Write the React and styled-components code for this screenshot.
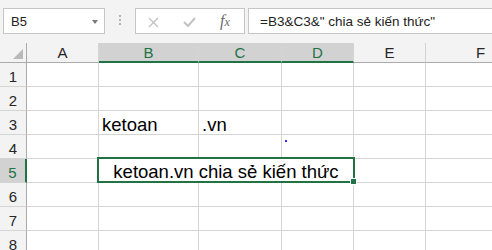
import React from "react";
import styled, { createGlobalStyle } from "styled-components";

const GREEN = "#217346";
const GRID = "#d4d4d4";
const HEAD = "#f3f3f3";
const HEAD_ON = "#d2d2d2";

const columns = [
  { name: "A", width: 72 },
  { name: "B", width: 100, selected: true },
  { name: "C", width: 83, selected: true },
  { name: "D", width: 72, selected: true },
  { name: "E", width: 72 },
  { name: "F", width: 110 },
];

const values = {
  3: { B: "ketoan", C: ".vn" },
};

export default function App() {
  return (
    <Page>
      <GlobalStyle />
      <Toolbar>
        <NameBox>
          <span>B5</span>
          <Arrow />
        </NameBox>
        <Grip>
          <Dot />
          <Dot />
          <Dot />
        </Grip>
        <FxBox>
          <svg width="11" height="11" viewBox="0 0 11 11">
            <path d="M1 1 L10 10 M10 1 L1 10" stroke="#c2c2c2" strokeWidth="1.4" fill="none" />
          </svg>
          <svg width="13" height="10" viewBox="0 0 13 10">
            <path d="M1 5 L5 9 L12 1" stroke="#c2c2c2" strokeWidth="2" fill="none" />
          </svg>
          <FxGlyph>
            f<small>x</small>
          </FxGlyph>
        </FxBox>
        <Formula>=B3&amp;C3&amp;" chia sẻ kiến thức"</Formula>
      </Toolbar>

      <Grid>
        <Corner>
          <svg width="10" height="10" viewBox="0 0 10 10">
            <polygon points="0,10 10,10 10,0" fill="#b9b9b9" />
          </svg>
        </Corner>
        {columns.map((c) => (
          <ColHeader key={c.name} $selected={c.selected}>
            {c.name}
          </ColHeader>
        ))}

        {[1, 2, 3, 4, 5, 6, 7, 8].map((row) => (
          <React.Fragment key={row}>
            <RowHeader $selected={row === 5}>{row}</RowHeader>
            {row === 5 ? (
              <>
                <Cell />
                <MergedCell>
                  ketoan.vn chia sẻ kiến thức
                  <Selection>
                    <Handle />
                  </Selection>
                </MergedCell>
                <Cell />
                <Cell />
              </>
            ) : (
              columns.map((c) => (
                <Cell key={c.name}>
                  {values[row] && values[row][c.name]}
                  {row === 4 && c.name === "D" && <Speck />}
                </Cell>
              ))
            )}
          </React.Fragment>
        ))}
      </Grid>
    </Page>
  );
}

const GlobalStyle = createGlobalStyle`
  body {
    margin: 0;
    background: #fff;
    overflow: hidden;
  }
`;

const Page = styled.div`
  width: 492px;
  height: 250px;
  overflow: hidden;
  font-family: "Liberation Sans", Arial, sans-serif;
`;

const Toolbar = styled.div`
  display: flex;
  align-items: flex-start;
  height: 43px;
  box-sizing: border-box;
  padding: 8px 0 0 3px;
  background: ${HEAD};
`;

const NameBox = styled.div`
  width: 102px;
  height: 26px;
  box-sizing: border-box;
  border: 1px solid #c6c6c6;
  background: #fff;
  display: flex;
  align-items: center;
  justify-content: space-between;
  padding: 1px 6px 0 7px;
  font-size: 13px;
  color: #222;
`;

const Arrow = styled.div`
  width: 0;
  height: 0;
  border-left: 3px solid transparent;
  border-right: 3px solid transparent;
  border-top: 4px solid #7a7a7a;
`;

const Grip = styled.div`
  width: 30px;
  display: flex;
  flex-direction: column;
  align-items: center;
  gap: 2px;
  padding-top: 7px;
`;

const Dot = styled.div`
  width: 2px;
  height: 2px;
  background: #b3b3b3;
`;

const FxBox = styled.div`
  width: 110px;
  height: 26px;
  box-sizing: border-box;
  border: 1px solid #c6c6c6;
  background: #fff;
  display: flex;
  align-items: center;
  gap: 24px;
  padding: 2px 0 0 12px;
`;

const FxGlyph = styled.span`
  font-family: "Liberation Serif", "Times New Roman", serif;
  font-style: italic;
  font-size: 16px;
  color: #6a6a6a;
  margin-top: -3px;

  small {
    font-size: 12px;
  }
`;

const Formula = styled.div`
  flex: 1;
  height: 26px;
  box-sizing: border-box;
  margin-left: 3px;
  border: 1px solid #c6c6c6;
  border-right: none;
  background: #fff;
  display: flex;
  align-items: center;
  padding: 1px 0 0 11px;
  font-size: 13.5px;
  color: #222;
  white-space: nowrap;
`;

const Grid = styled.div`
  display: grid;
  grid-template-columns: 27px ${columns.map((c) => c.width + "px").join(" ")};
  grid-template-rows: 20px;
  grid-auto-rows: 24px;
`;

const Corner = styled.div`
  box-sizing: border-box;
  background: ${HEAD};
  border-right: 1px solid #ababab;
  border-bottom: 1px solid #ababab;
  display: flex;
  align-items: flex-end;
  justify-content: flex-end;
  padding: 0 3px 3px 0;
`;

const ColHeader = styled.div`
  box-sizing: border-box;
  display: flex;
  align-items: center;
  justify-content: center;
  background: ${(p) => (p.$selected ? HEAD_ON : HEAD)};
  color: ${(p) => (p.$selected ? GREEN : "#262626")};
  border-right: 1px solid ${GRID};
  border-bottom: ${(p) => (p.$selected ? `2px solid ${GREEN}` : "1px solid #ababab")};
  font-size: 15px;
`;

const RowHeader = styled.div`
  box-sizing: border-box;
  background: ${(p) => (p.$selected ? HEAD_ON : HEAD)};
  color: ${(p) => (p.$selected ? GREEN : "#262626")};
  border-right: ${(p) => (p.$selected ? `2px solid ${GREEN}` : "1px solid #ababab")};
  border-bottom: 1px solid ${GRID};
  text-align: center;
  font-size: 15px;
  line-height: 19px;
  padding-top: 4px;
`;

const Cell = styled.div`
  position: relative;
  box-sizing: border-box;
  border-right: 1px solid ${GRID};
  border-bottom: 1px solid ${GRID};
  padding: 4px 3px 0;
  font-size: 18.5px;
  line-height: 19px;
  color: #000;
  white-space: nowrap;
`;

const MergedCell = styled(Cell)`
  grid-column: span 3;
  text-align: center;
  padding-top: 3px;
  z-index: 1;
`;

const Selection = styled.div`
  position: absolute;
  top: -2px;
  left: -2px;
  right: -2px;
  bottom: -1px;
  border: 2px solid ${GREEN};
  pointer-events: none;
`;

const Handle = styled.div`
  position: absolute;
  right: -4px;
  bottom: -4px;
  width: 5px;
  height: 5px;
  background: ${GREEN};
  border: 1px solid #fff;
`;

const Speck = styled.div`
  position: absolute;
  left: 3px;
  top: 5px;
  width: 2px;
  height: 2px;
  background: #2e2eff;
`;
